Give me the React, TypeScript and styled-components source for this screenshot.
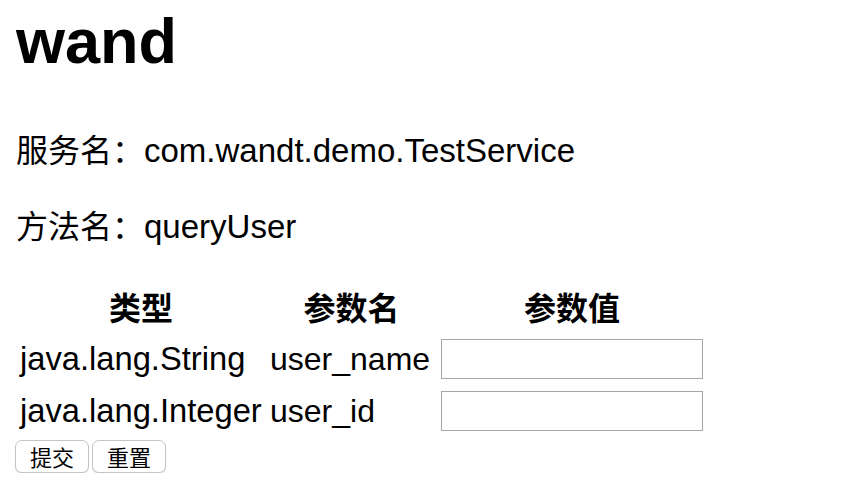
import React from "react";
import styled, { createGlobalStyle } from "styled-components";

const GlobalStyle = createGlobalStyle`
  html, body {
    margin: 0;
    padding: 0;
    background: #ffffff;
  }
  body {
    font-family: "Liberation Sans", Arial, "Noto Sans CJK SC", sans-serif;
    color: #000000;
  }
`;

const Page = styled.div`
  padding: 4px 16px 0 16px;
  font-size: 32px;
  line-height: 44px;
`;

const Title = styled.h1`
  margin: 0 0 51px 0;
  font-size: 63px;
  line-height: 74px;
  font-weight: bold;
`;

const Field = styled.p`
  margin: 0 0 32px 0;
  font-size: 32px;
  line-height: 44px;
`;

const Value = styled.span`
  font-size: 33px;
`;

const ParamTable = styled.table`
  border-collapse: separate;
  border-spacing: 4px;
  margin: 34px 0 0 -2px;
  font-size: 32px;
`;

const HeadCell = styled.th<{ $w?: number }>`
  padding: 2px;
  font-weight: bold;
  line-height: 40px;
  text-align: center;
  ${(p) => (p.$w ? `width: ${p.$w}px;` : "")}
`;

const Cell = styled.td<{ $size?: number }>`
  padding: 2px;
  font-size: ${(p) => p.$size ?? 32}px;
  line-height: 40px;
  vertical-align: middle;
  white-space: nowrap;
`;

const ValueInput = styled.input`
  display: block;
  box-sizing: border-box;
  width: 262px;
  height: 40px;
  margin: 2px 0;
  padding: 0 4px;
  border: 1px solid #a6a6a6;
  border-radius: 0;
  background: #ffffff;
  font-size: 26px;
  font-family: "Liberation Sans", Arial, sans-serif;
  outline: none;
`;

const ButtonRow = styled.div`
  display: flex;
  gap: 3px;
  margin: 1px 0 0 -1px;
`;

const ActionButton = styled.button`
  box-sizing: border-box;
  height: 33px;
  padding: 0 14px;
  border: 1px solid #c4c4c4;
  border-radius: 7px;
  background: #ffffff;
  box-shadow: 0 1px 1px rgba(0, 0, 0, 0.12);
  font-family: "Noto Sans CJK SC", sans-serif;
  font-size: 22px;
  line-height: 31px;
  color: #000000;
  cursor: pointer;
`;

const params = [
  { type: "java.lang.String", name: "user_name" },
  { type: "java.lang.Integer", name: "user_id" },
];

export default function App() {
  return (
    <>
      <GlobalStyle />
      <Page>
        <Title>wand</Title>
        <Field>
          服务名：<Value>com.wandt.demo.TestService</Value>
        </Field>
        <Field>
          方法名：<Value>queryUser</Value>
        </Field>
        <form onSubmit={(e) => e.preventDefault()}>
          <ParamTable>
            <thead>
              <tr>
                <HeadCell $w={242}>类型</HeadCell>
                <HeadCell $w={163}>参数名</HeadCell>
                <HeadCell>参数值</HeadCell>
              </tr>
            </thead>
            <tbody>
              {params.map((p) => (
                <tr key={p.name}>
                  <Cell $size={32.7}>{p.type}</Cell>
                  <Cell>{p.name}</Cell>
                  <Cell>
                    <ValueInput type="text" name={p.name} />
                  </Cell>
                </tr>
              ))}
            </tbody>
          </ParamTable>
          <ButtonRow>
            <ActionButton type="submit">提交</ActionButton>
            <ActionButton type="reset">重置</ActionButton>
          </ButtonRow>
        </form>
      </Page>
    </>
  );
}
